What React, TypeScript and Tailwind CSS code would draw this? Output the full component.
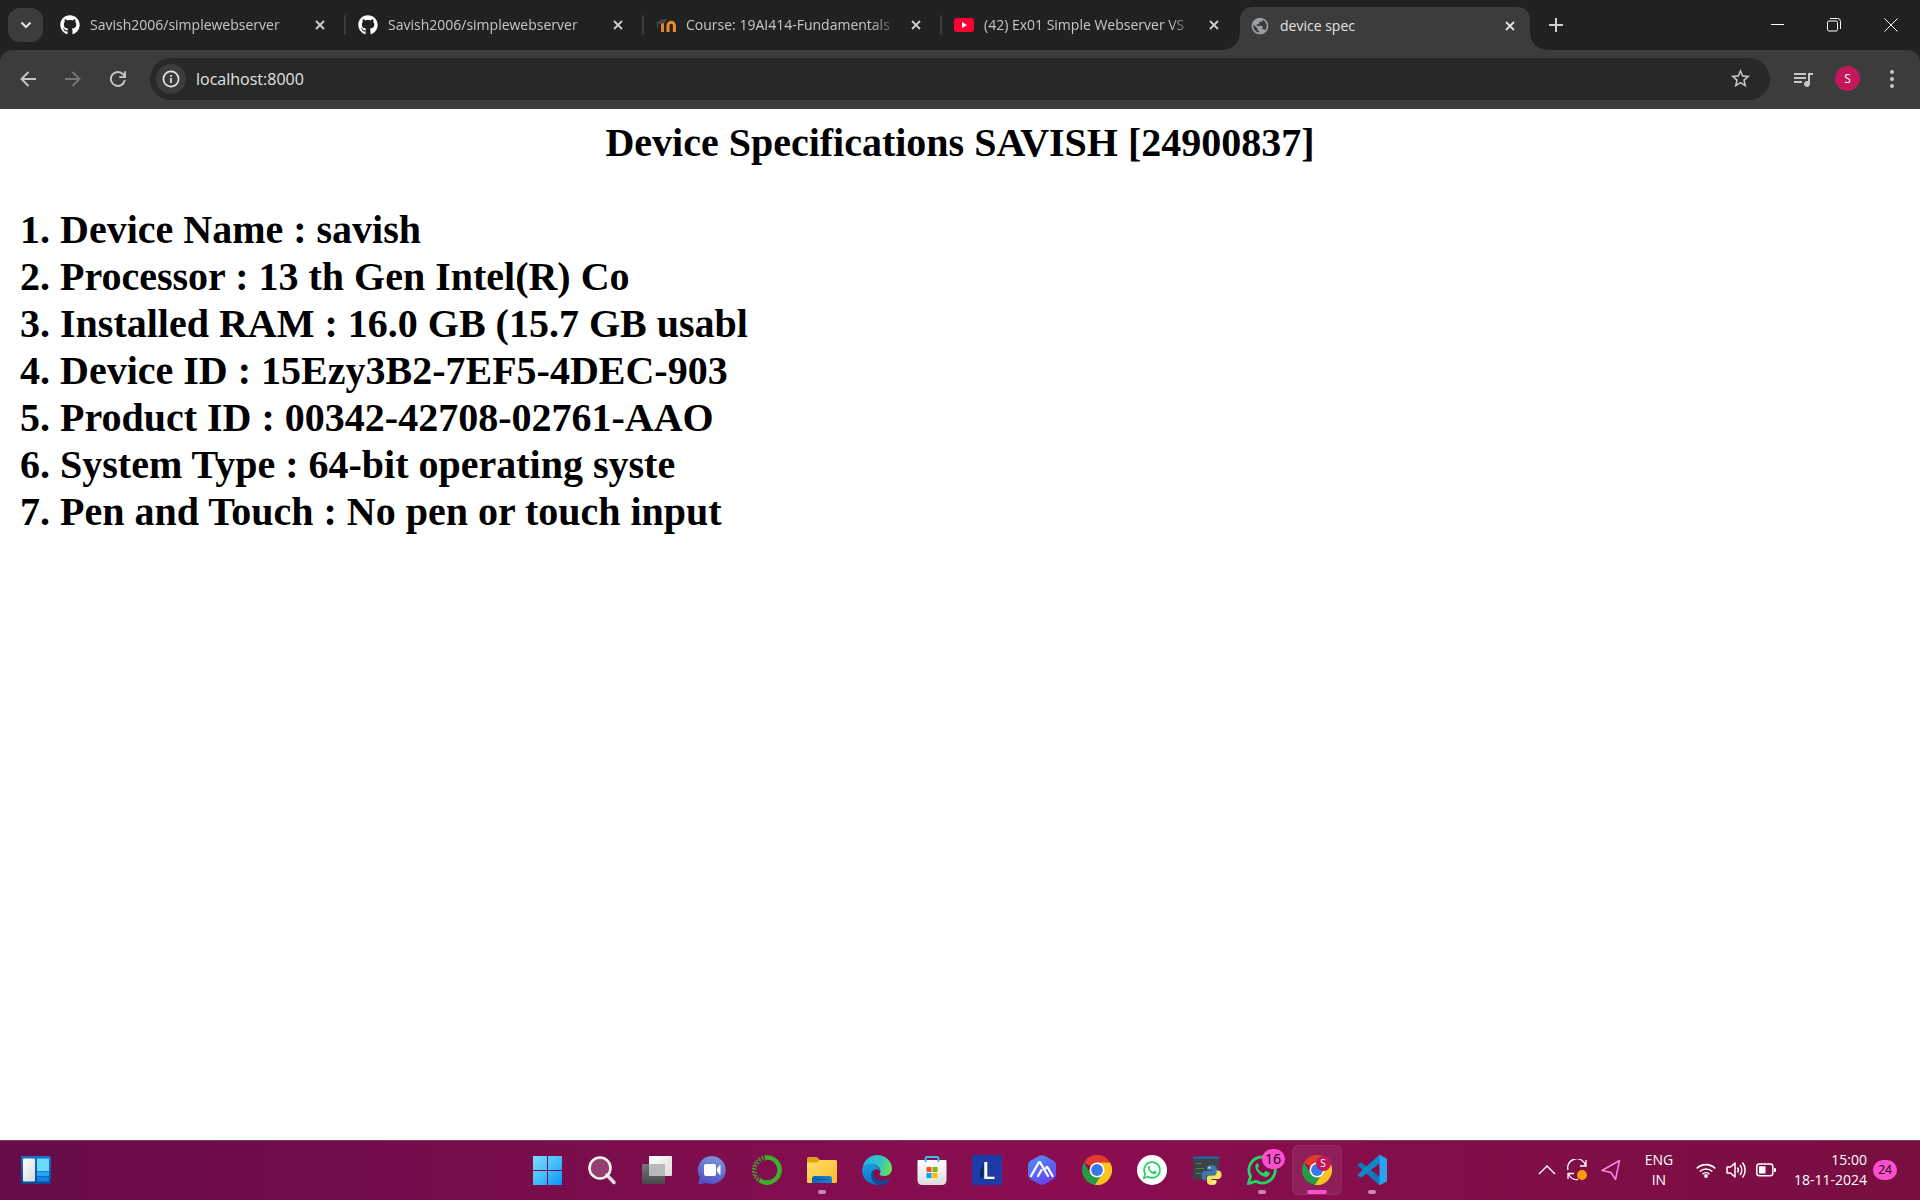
import type { ReactNode } from "react";
import { FaGithub } from "react-icons/fa";
import { MdOutlineStarBorder, MdQueueMusic, MdPublic } from "react-icons/md";

function CloseIcon() {
  return (
    <svg viewBox="0 0 10 10" className="size-2.5" fill="none" stroke="currentColor" strokeWidth="1.8">
      <path d="M1 1 L9 9 M9 1 L1 9" />
    </svg>
  );
}

function MoodleIcon() {
  return (
    <svg viewBox="0 0 20 20" className="size-5" fill="none">
      <path d="M6.5 17V8" stroke="#e8822a" strokeWidth="3" />
      <path d="M12 17v-6.500a3.200 3.200 0 0 1 6.400 0V17" stroke="#f08a24" strokeWidth="3" />
      <path d="M0 8 5 4.500 11 4 8.500 8 4 9Z" fill="#4d4447" />
      <path d="M1.500 8v5" stroke="#55494a" strokeWidth="1" />
    </svg>
  );
}

function YoutubeIcon() {
  return (
    <svg viewBox="0 0 20 20" className="size-5">
      <rect y="3" width="20" height="14" rx="3" fill="#ff0033" />
      <path d="M8 7v6l5-3Z" fill="#fff" />
    </svg>
  );
}

type TabInfo = { title: string; icon: ReactNode };

const tabs: TabInfo[] = [
  { title: "Savish2006/simplewebserver", icon: <FaGithub className="size-5 text-white" /> },
  { title: "Savish2006/simplewebserver", icon: <FaGithub className="size-5 text-white" /> },
  { title: "Course: 19AI414-Fundamentals", icon: <MoodleIcon /> },
  { title: "(42) Ex01 Simple Webserver VS", icon: <YoutubeIcon /> },
];

function Tab({ title, icon, last }: TabInfo & { last: boolean }) {
  return (
    <div className="flex h-full w-[298px] min-w-0 items-center">
      <button role="tab" aria-selected="false" className="flex min-w-0 flex-1 items-center gap-2.5 pl-3 text-[#c7c7c7]">
        <span className="shrink-0">{icon}</span>
        <span className="flex-1 text-left whitespace-nowrap [mask-image:linear-gradient(to_right,black_86%,transparent)]">
          {title}
        </span>
      </button>
      <button aria-label={`Close ${title}`} className="flex size-8 shrink-0 items-center justify-center text-[#d0d0d0]">
        <CloseIcon />
      </button>
      <span className={last ? "ml-2 h-5 w-0.5" : "ml-2 h-5 w-0.5 rounded bg-[#3c3c3c]"} />
    </div>
  );
}

function TabStrip() {
  return (
    <header className="flex h-[50px] items-center bg-[#202222] text-sm">
      <button aria-label="Search tabs" className="ml-2 mr-[5px] flex h-[34px] w-[35px] shrink-0 items-center justify-center rounded-xl bg-[#3c3c3c] text-[#e3e3e3]">
        <svg viewBox="0 0 12 8" className="h-2 w-3" fill="none" stroke="currentColor" strokeWidth="2">
          <path d="M1.5 1.5 6 6l4.5-4.5" />
        </svg>
      </button>
      <div role="tablist" className="flex h-full min-w-0 items-center">
        {tabs.map((t, i) => (
          <Tab key={i} {...t} last={i === tabs.length - 1} />
        ))}
        <div className="relative flex h-[43px] w-[290px] items-center self-end rounded-t-xl bg-[#3c3c3c]">
          <span className="absolute bottom-0 -left-4 size-4 bg-[radial-gradient(circle_at_0_0,transparent_15px,#3c3c3c_16px)]" />
          <span className="absolute -right-4 bottom-0 size-4 bg-[radial-gradient(circle_at_100%_0,transparent_15px,#3c3c3c_16px)]" />
          <button role="tab" aria-selected="true" className="flex min-w-0 flex-1 items-center gap-2.5 pb-1.5 pl-2.5 text-[#e3e3e3]">
            <MdPublic className="size-5 text-[#9aa0a6]" />
            device spec
          </button>
          <button aria-label="Close device spec" className="mr-1 flex size-8 items-center justify-center pb-1.5 text-[#e3e3e3]">
            <CloseIcon />
          </button>
        </div>
      </div>
      <button aria-label="New tab" className="ml-2.5 flex size-8 shrink-0 items-center justify-center text-[#d0d0d0]">
        <svg viewBox="0 0 14 14" className="size-3.5" fill="none" stroke="currentColor" strokeWidth="2">
          <path d="M7 0v14M0 7h14" />
        </svg>
      </button>
      <div className="ml-auto flex h-full shrink-0 text-white">
        <button aria-label="Minimize" className="flex w-14 items-center justify-center">
          <svg viewBox="0 0 14 14" className="size-3.5" stroke="currentColor"><path d="M0 6.5h13" /></svg>
        </button>
        <button aria-label="Restore" className="flex w-14 items-center justify-center">
          <svg viewBox="0 0 14 14" className="size-3.5" fill="none" stroke="currentColor">
            <rect x=".5" y="3" width="10" height="10" rx="1.5" />
            <path d="M3 .5h7.5a3 3 0 0 1 3 3V11" />
          </svg>
        </button>
        <button aria-label="Close window" className="flex w-[58px] items-center justify-center">
          <svg viewBox="0 0 14 14" className="size-3.5" stroke="currentColor"><path d="m.5.5 13 13M13.5.5l-13 13" /></svg>
        </button>
      </div>
    </header>
  );
}

function Toolbar() {
  return (
    <div className="bg-[#202222]">
      <nav className="flex h-[59px] items-center rounded-t-xl bg-[#3c3c3c] pb-0.5 pl-[5px] text-[#c7c7c7]">
        <button aria-label="Back" className="flex h-10 w-[45px] items-center justify-center">
          <svg viewBox="0 0 16 16" className="size-4" fill="none" stroke="currentColor" strokeWidth="1.9"><path d="M16 8H1.5M8.5 1 1.5 8l7 7" /></svg>
        </button>
        <button aria-label="Forward" className="flex h-10 w-[45px] items-center justify-center text-[#757575]">
          <svg viewBox="0 0 16 16" className="size-4" fill="none" stroke="currentColor" strokeWidth="1.9"><path d="M0 8h14.5M7.5 1l7 7-7 7" /></svg>
        </button>
        <button aria-label="Reload" className="flex h-10 w-[45px] items-center justify-center">
          <svg viewBox="0 0 16 16" className="size-4" fill="none" stroke="currentColor" strokeWidth="1.9">
            <path d="M14.800 9.200A7 7 0 1 1 13 3.200L15 5.500" /><path d="M15 .3v5.800H9.300" />
          </svg>
        </button>
        <div className="ml-2.5 flex h-[42px] flex-1 items-center rounded-full bg-[#282828] px-1.5">
          <button aria-label="Site information" className="flex size-[30px] items-center justify-center rounded-full bg-[#3c3c3c] text-[#e3e3e3]">
            <svg viewBox="0 0 18 18" className="size-[18px]" fill="none" stroke="currentColor" strokeWidth="1.7">
              <circle cx="9" cy="9" r="7.6" /><path d="M9 8v5M9 5v1.7" />
            </svg>
          </button>
          <input aria-label="Address" defaultValue="localhost:8000" className="ml-2.5 min-w-0 flex-1 bg-transparent text-base text-[#e3e3e3] outline-none" />
          <button aria-label="Bookmark this page" className="mr-1 flex size-10 items-center justify-center">
            <MdOutlineStarBorder className="size-[23px]" />
          </button>
        </div>
        <button aria-label="Media controls" className="ml-2.5 flex h-10 w-[45px] items-center justify-center">
          <MdQueueMusic className="size-6" />
        </button>
        <button aria-label="Profile" className="ml-2.5 flex size-[25px] items-center justify-center rounded-full bg-[#c2185b] text-xs text-white">S</button>
        <button aria-label="Menu" className="ml-2.5 mr-1.5 flex h-10 w-11 items-center justify-center">
          <svg viewBox="0 0 4 18" className="h-[18px] w-1" fill="currentColor">
            <circle cx="2" cy="2" r="2" /><circle cx="2" cy="9" r="2" /><circle cx="2" cy="16" r="2" />
          </svg>
        </button>
      </nav>
    </div>
  );
}

const specs = [
  "Device Name : savish",
  "Processor : 13 th Gen Intel(R) Co",
  "Installed RAM : 16.0 GB (15.7 GB usabl",
  "Device ID : 15Ezy3B2-7EF5-4DEC-903",
  "Product ID : 00342-42708-02761-AAO",
  "System Type : 64-bit operating syste",
  "Pen and Touch : No pen or touch input",
];

function Page() {
  return (
    <main className="flex-1 bg-white px-5 pt-2.5 font-['Liberation_Serif',serif] text-[40px] leading-[47px] font-bold text-black">
      <h1 className="text-center">Device Specifications SAVISH [24900837]</h1>
      <ol className="mt-10 list-inside list-decimal">
        {specs.map((s) => (
          <li key={s}>{s}</li>
        ))}
      </ol>
    </main>
  );
}

function Svg({ children }: { children: ReactNode }) {
  return <svg viewBox="0 0 30 30" className="size-[30px]" fill="none">{children}</svg>;
}

function WidgetsIcon() {
  return (
    <svg viewBox="0 0 30 28" className="h-7 w-[30px]">
      <defs>
        <linearGradient id="wdA" x1="0" y1="0" x2="0" y2="1"><stop stopColor="#1873c4" /><stop offset="1" stopColor="#0a4a92" /></linearGradient>
        <linearGradient id="wdB" x1="0" y1="0" x2="1" y2="1"><stop stopColor="#fff" /><stop offset="1" stopColor="#d8d8d8" /></linearGradient>
      </defs>
      <rect width="30" height="28" rx="1.5" fill="url(#wdA)" />
      <rect x="2" y="2.5" width="12" height="23" rx="1" fill="url(#wdB)" />
      <path d="M16 2.500h12V15H16Z" fill="#6ad9ff" />
      <path d="M16 15.500h12V20H16Z" fill="#27a5f7" />
      <path d="M16 20.500h12v5H16Z" fill="#0a84ea" />
    </svg>
  );
}

function StartIcon() {
  return (
    <Svg>
      <defs><linearGradient id="st" x1="0" y1="0" x2="30" y2="30" gradientUnits="userSpaceOnUse"><stop stopColor="#84dcff" /><stop offset=".5" stopColor="#48c0fa" /><stop offset="1" stopColor="#0a92fa" /></linearGradient></defs>
      <path d="M1 1h14v14H1ZM16 1h14v14H16ZM1 16h14v14H1ZM16 16h14v14H16Z" fill="url(#st)" />
    </Svg>
  );
}

function SearchIcon() {
  return (
    <Svg>
      <path d="m20 20 7 7.500" stroke="#dedede" strokeWidth="3.5" strokeLinecap="round" />
      <circle cx="13" cy="13" r="10.5" fill="#fff" fillOpacity=".2" stroke="#efefef" strokeWidth="2.6" />
    </Svg>
  );
}

function TaskViewIcon() {
  return (
    <Svg>
      <defs>
        <linearGradient id="tvA" x1="0" y1="0" x2="1" y2="1"><stop stopColor="#fff" /><stop offset="1" stopColor="#dcdcdc" /></linearGradient>
        <linearGradient id="tvB" x1="0" y1="0" x2="0" y2="1"><stop stopColor="#777" /><stop offset="1" stopColor="#484848" /></linearGradient>
      </defs>
      <rect x="0" y="9" width="23" height="20" rx="1" fill="url(#tvB)" />
      <rect x="7" y="1" width="23" height="20" rx="1" fill="url(#tvA)" />
      <path d="M7 9h16v12H8a1 1 0 0 1-1-1Z" fill="#b9b9b9" />
    </Svg>
  );
}

function ChatIcon() {
  return (
    <Svg>
      <defs><linearGradient id="ch" x1=".7" y1="0" x2=".4" y2="1"><stop stopColor="#7b95dd" /><stop offset="1" stopColor="#5050c2" /></linearGradient></defs>
      <path d="M15 1a14 14 0 1 1-5.500 27L1 29.500 2.800 22A14 14 0 0 1 15 1Z" fill="url(#ch)" />
      <rect x="7" y="9" width="12" height="12" rx="2" fill="#fff" />
      <path d="m20 13.500 2.500-3q1-1 1 .3v8.400q0 1.300-1 .3l-2.500-3Z" fill="#fff" />
    </Svg>
  );
}

function CondaIcon() {
  return (
    <Svg>
      <path d="M13 2.700A12.500 12.500 0 1 1 7.500 25" stroke="#3fae2a" strokeWidth="4.500" />
      <path d="M14 1.200A14 14 0 0 0 6 26" stroke="#3fae2a" strokeWidth="1.600" strokeDasharray="1.800 1.300" />
      <path d="M14 3.200A12 12 0 0 0 7.500 25" stroke="#3fae2a" strokeWidth="1.600" strokeDasharray="2 1.500" strokeDashoffset="1.500" />
      <path d="M13 5A10.300 10.300 0 0 0 8.500 23.500" stroke="#3fae2a" strokeWidth="1.200" strokeDasharray="1.300 2" />
    </Svg>
  );
}

function ExplorerIcon() {
  return (
    <Svg>
      <defs>
        <linearGradient id="ex" x1="0" y1="0" x2="1" y2="1"><stop stopColor="#ffe069" /><stop offset="1" stopColor="#fdb92c" /></linearGradient>
        <linearGradient id="exb" x1="0" y1="0" x2="1" y2="0"><stop stopColor="#0a66b4" /><stop offset="1" stopColor="#1b83d4" /></linearGradient>
      </defs>
      <path d="M0 3.500Q0 2 1.500 2H9q1 0 1.800.8L13 5v5H0Z" fill="#e2a014" />
      <path d="M0 7.500h10l3-2.500h15.500Q30 5 30 6.500v20q0 1.500-1.500 1.500h-27Q0 28 0 26.500Z" fill="url(#ex)" />
      <path d="M5 28v-4.500Q5 21 7.500 21h15q2.500 0 2.500 2.500V28Z" fill="url(#exb)" />
      <path d="M9 24.500h12" stroke="#084c8c" strokeWidth="1.200" strokeLinecap="round" />
    </Svg>
  );
}

function EdgeIcon() {
  return (
    <Svg>
      <defs>
        <linearGradient id="edA" x1="0" y1=".3" x2="1" y2=".5"><stop stopColor="#2bb0e8" /><stop offset=".6" stopColor="#33c6c4" /><stop offset="1" stopColor="#6ae24e" /></linearGradient>
        <linearGradient id="edB" x1=".3" y1="0" x2=".5" y2="1"><stop stopColor="#1b9de2" /><stop offset="1" stopColor="#0b6fc4" /></linearGradient>
      </defs>
      <path d="M.5 13C2 5 8 0 15 0c9 0 15 6.500 15 13.500 0 5-4 7.500-8 7.500-3.500 0-5-1.300-4.300-2.500 1.300-1.500 1.300-6-3.700-8.500C9 8 3 9 .5 13Z" fill="url(#edA)" />
      <path d="M.2 13.500C2.500 9 9 7.500 13.500 10c3 1.500 4.500 4 4.500 6-4-4-8 0-7 5 1 4.500 4.500 7.500 8.500 8.300C8 32-1 24 .2 13.500Z" fill="url(#edB)" />
      <path d="M12.500 14.500c-3.500 5.500 1 12 8.500 11.500 2.500-.2 4.500-1 6.500-2.200 1-.5 1.300.2.800.9-3 4-7.300 5.500-11 5.300-8-1.500-11.500-11-4.800-15.500Z" fill="#0c4c96" />
    </Svg>
  );
}

function StoreIcon() {
  return (
    <Svg>
      <defs><linearGradient id="so" x1="0" y1="0" x2="0" y2="1"><stop stopColor="#fff" /><stop offset="1" stopColor="#dcdcdc" /></linearGradient></defs>
      <path d="M.5 6q0-1 1-1h27q1 0 1 1v19q0 5-5 5h-19q-5 0-5-5Z" fill="url(#so)" />
      <path d="M8.500 7V3.500q0-1.500 1.500-1.500h10q1.500 0 1.500 1.500V7" stroke="#35bdf2" strokeWidth="2" />
      <path d="M9.500 12h5v5h-5Z" fill="#f25022" /><path d="M15.500 12h5v5h-5Z" fill="#7fba00" />
      <path d="M9.500 18h5v5h-5Z" fill="#00a4ef" /><path d="M15.500 18h5v5h-5Z" fill="#ffb900" />
    </Svg>
  );
}

function LIcon() {
  return (
    <span className="relative flex size-[30px] items-center justify-center bg-[#1d3ba6] pl-1 text-2xl leading-none font-semibold text-white">
      <svg viewBox="0 0 30 30" className="absolute inset-0"><path d="M11.500 6v16L8 23V19Z" fill="#0a2350" /></svg>
      <span className="relative">L</span>
    </span>
  );
}

function HexIcon() {
  return (
    <Svg>
      <defs><linearGradient id="hx" x1=".2" y1="0" x2=".7" y2="1"><stop stopColor="#4f8df5" /><stop offset="1" stopColor="#6540ee" /></linearGradient></defs>
      <path d="M12.500.8q2.500-1.200 5 0l9 5Q29 7.200 29 10v10q0 2.800-2.500 4.200l-9 5q-2.500 1.200-5 0l-9-5Q1 22.800 1 20V10q0-2.800 2.500-4.200Z" fill="url(#hx)" />
      <path d="m4 21 7.500-13Q12.500 6.500 13.500 8L21 21M11 21l3.500-6M19 13q1-2 2 0l4.500 8" stroke="#fff" strokeWidth="2.300" strokeLinecap="round" />
    </Svg>
  );
}

function ChromeIcon() {
  return (
    <Svg>
      <path d="M15 15 2 7.500A15 15 0 0 1 28 7.500H15Z" fill="#e33b2e" />
      <path d="M2 7.500 8.500 18.700 15 22.500 12.500 29.800A15 15 0 0 1 2 7.500Z" fill="#259b45" />
      <path d="M15 7.500h13A15 15 0 0 1 13.500 29.900L21.500 18.800Z" fill="#fcc31e" />
      <path d="M8.500 18.700 15 22.500l6.500-3.700-7.500 11.100-2-.2Z" fill="#259b45" />
      <path d="M21.500 18.800 15 29.900h-2l5-8Z" fill="#fcc31e" />
      <circle cx="15" cy="15" r="7.500" fill="#fff" /><circle cx="15" cy="15" r="5.900" fill="#3b78e7" />
    </Svg>
  );
}

const phonePath =
  "M10.300 8.200c-.5.100-2 1.300-2 3.400 0 4.300 6 10.600 11 10.300 1.800-.1 3.300-1.500 3.400-3.300 0-.8-.2-.9-1-1.300l-2.300-1.100c-.7-.3-1-.2-1.400.4l-1 1.200c-.3.400-.7.400-1.300.100-2.300-1-3.900-2.700-4.800-4.400-.2-.4-.1-.7.200-1l.8-1.100c.2-.3.200-.6 0-1l-1-2.200c-.2-.3-.4-.2-.6 0Z";

function WhatsAppGlyph() {
  return (
    <>
      <path d="M15.300 2A13 13 0 1 1 8.800 26.300L1.500 28.500l2.100-7.200A13 13 0 0 1 15.300 2Z" stroke="#25d366" strokeWidth="2.800" />
      <path d={phonePath} fill="#25d366" />
    </>
  );
}

function WhatsAppRoundIcon() {
  return (
    <Svg>
      <circle cx="15" cy="15" r="15" fill="#fff" />
      <g transform="translate(6 6) scale(.6)"><WhatsAppGlyph /></g>
    </Svg>
  );
}

function PythonIcon() {
  return (
    <Svg>
      <rect x="1" y="1.5" width="26" height="23" fill="#3e4248" /><rect x="1" y="1.5" width="26" height="2.5" fill="#2464a4" />
      <path d="M4 8.500h6M4 13.500h8M4 18.500h5" stroke="#3c8f3c" strokeWidth="1" />
      <path d="M19.500 10c-4 0-4.500 1.500-4.500 3v2h5v1h-7c-3 0-3.500 2.500-3.500 5s1.500 4.500 3.500 4.500h1.500v-3c0-1.500 1-2.500 2.500-2.500h5.500c1 0 2-1 2-2v-5c0-2-2-3-5-3Z" fill="#3c79ad" />
      <path d="M20 30c4 0 4.500-1.500 4.500-3v-2h-5v-1h6.500c3 0 3.500-2.500 3.500-4.500 0-2.500-1.500-4-3.500-4h-1.500V18c0 1.500-1 2.500-2.500 2.500h-5c-1 0-2 1-2 2V27c0 2 2 3 5 3Z" fill="#ffe05e" />
      <circle cx="17.5" cy="12.7" r="1" fill="#fff" /><circle cx="22" cy="27" r="1" fill="#fff" />
    </Svg>
  );
}

function VsCodeIcon() {
  return (
    <Svg>
      <path d="m1 9.500 2-1.800q.8-.6 1.600 0L23 22v7.500q-1 .3-2-.5L1 11Q.3 10.200 1 9.500Z" fill="#0f78bd" />
      <path d="m1 20.500 2 1.800q.8.600 1.600 0L23 8V.5q-1-.3-2 .5L1 19Q.3 19.800 1 20.500Z" fill="#1186c9" />
      <path d="M22 0q.4-.1 1 .1l5.800 2.800Q30 3.500 30 4.800v20.400q0 1.300-1.200 1.900L23 29.900q-1 .3-1.800-.4 1.300.5 1.300-1V1.500Q22.500 0 21.200.5Z" fill="#29a3ee" />
    </Svg>
  );
}

type AppInfo = { name: string; icon: ReactNode; running?: boolean; active?: boolean; badge?: ReactNode };

const apps: AppInfo[] = [
  { name: "Start", icon: <StartIcon /> },
  { name: "Search", icon: <SearchIcon /> },
  { name: "Task view", icon: <TaskViewIcon /> },
  { name: "Chat", icon: <ChatIcon /> },
  { name: "Anaconda", icon: <CondaIcon /> },
  { name: "File Explorer", icon: <ExplorerIcon />, running: true },
  { name: "Edge", icon: <EdgeIcon /> },
  { name: "Store", icon: <StoreIcon /> },
  { name: "L", icon: <LIcon /> },
  { name: "AI", icon: <HexIcon /> },
  { name: "Chrome", icon: <ChromeIcon /> },
  { name: "WhatsApp Web", icon: <WhatsAppRoundIcon /> },
  { name: "Python", icon: <PythonIcon /> },
  {
    name: "WhatsApp",
    icon: <Svg><WhatsAppGlyph /></Svg>,
    running: true,
    badge: <span className="absolute top-1 right-0.5 flex h-5 w-[23px] items-center justify-center rounded-full bg-[#ff4fd0] text-sm text-black">16</span>,
  },
  {
    name: "Chrome profile S",
    icon: <ChromeIcon />,
    active: true,
    badge: <span className="absolute top-2.5 right-2.5 flex size-[15px] items-center justify-center rounded-full bg-[#c2185b] text-[10px] text-white">S</span>,
  },
  { name: "Visual Studio Code", icon: <VsCodeIcon />, running: true },
];

function AppButton({ name, icon, running, active, badge }: AppInfo) {
  return (
    <button
      aria-label={name}
      className={
        active
          ? "relative flex size-[50px] items-center justify-center rounded-md border border-white/5 bg-white/8"
          : "relative flex size-[50px] items-center justify-center"
      }
    >
      {icon}
      {badge}
      {running && <span className="absolute bottom-px left-[21px] h-1 w-2 rounded-full bg-[#c58bab]" />}
      {active && <span className="absolute bottom-0 left-3.5 h-1 w-5 rounded-full bg-[#ff4fd0]" />}
    </button>
  );
}

function Tray() {
  return (
    <div className="flex flex-1 items-center justify-end pr-[23px] text-white">
      <button aria-label="Show hidden icons" className="flex w-[30px] justify-center">
        <svg viewBox="0 0 18 10" className="h-2.5 w-[18px]" fill="none" stroke="currentColor" strokeWidth="1.4"><path d="m1 9 8-8 8 8" /></svg>
      </button>
      <button aria-label="Update" className="flex w-[30px] justify-center">
        <svg viewBox="0 0 20 22" className="h-[22px] w-5" fill="none" stroke="currentColor" strokeWidth="1.3">
          <path d="M1 11A9 9 0 0 1 18.500 6.500M19 1v6h-6M1 20v-5.500h6M1.500 15A9 9 0 0 0 11 20.500" />
          <circle cx="15" cy="16" r="5" fill="#ff9c0a" stroke="none" />
        </svg>
      </button>
      <button aria-label="Location" className="ml-1 flex w-[30px] justify-center">
        <svg viewBox="0 0 20 22" className="h-[22px] w-5" fill="none" stroke="#f48ae0" strokeWidth="1.5" strokeLinejoin="round"><path d="M18.500 1.500 1 11.500l9 2 4.500 7Z" /></svg>
      </button>
      <button aria-label="Input language" className="ml-3 w-[42px] text-center text-sm leading-5">ENG<br />IN</button>
      <button aria-label="Network, volume and battery" className="ml-4 flex items-center gap-2.5">
        <svg viewBox="0 0 20 16" className="h-4 w-5" fill="none" stroke="currentColor" strokeWidth="1.6">
          <path d="M.7 6.500a13.200 13.200 0 0 1 18.600 0M3.700 9.500a9 9 0 0 1 12.600 0M6.500 12.200a5 5 0 0 1 7 0" /><circle cx="10" cy="14" r="1.9" fill="currentColor" stroke="none" />
        </svg>
        <svg viewBox="0 0 20 18" className="h-[18px] w-5" fill="none" stroke="currentColor" strokeWidth="1.5" strokeLinejoin="round">
          <path d="M1 6h3.500L9 2v14l-4.500-4H1ZM11.500 6.500a4 4 0 0 1 0 5M14 4a8 8 0 0 1 0 10M16.500 1.500a12 12 0 0 1 0 15" />
        </svg>
        <svg viewBox="0 0 20 14" className="h-3.5 w-5">
          <rect x=".8" y="1" width="16" height="11.8" rx="2.5" fill="none" stroke="currentColor" strokeWidth="1.5" />
          <path d="M3 3.200h6.500v7.400H3ZM18 5h1q1 0 1 1v2q0 1-1 1h-1Z" fill="currentColor" />
        </svg>
      </button>
      <button className="ml-[18px] text-right text-sm leading-5">15:00<br />18-11-2024</button>
      <button aria-label="24 notifications" className="ml-1.5 flex h-5 w-6 items-center justify-center rounded-full bg-[#ff4fd0] text-xs text-black">24</button>
    </div>
  );
}

export default function App() {
  return (
    <div className="flex min-h-screen flex-col font-['Open_Sans',sans-serif]">
      <TabStrip />
      <Toolbar />
      <Page />
      <footer className="flex h-[60px] items-center border-t border-[#7b3b63] bg-linear-to-r from-[#660c48] via-[#8b0d50] via-55% to-[#780e40] pb-0.5 pl-0.5">
        <div className="flex flex-1 pl-[19px]">
          <button aria-label="Widgets"><WidgetsIcon /></button>
        </div>
        <div className="flex gap-[5px]">
          {apps.map((a) => (
            <AppButton key={a.name} {...a} />
          ))}
        </div>
        <Tray />
      </footer>
    </div>
  );
}
